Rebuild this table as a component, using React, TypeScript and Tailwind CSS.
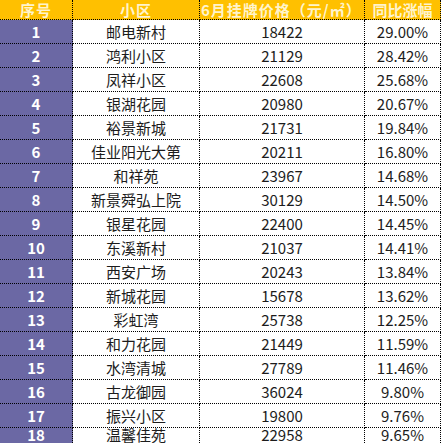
import React from "react";

const rows: [string, string, string, string][] = [
  ["1", "邮电新村", "18422", "29.00%"],
  ["2", "鸿利小区", "21129", "28.42%"],
  ["3", "凤祥小区", "22608", "25.68%"],
  ["4", "银湖花园", "20980", "20.67%"],
  ["5", "裕景新城", "21731", "19.84%"],
  ["6", "佳业阳光大第", "20211", "16.80%"],
  ["7", "和祥苑", "23967", "14.68%"],
  ["8", "新景舜弘上院", "30129", "14.50%"],
  ["9", "银星花园", "22400", "14.45%"],
  ["10", "东溪新村", "21037", "14.41%"],
  ["11", "西安广场", "20243", "13.84%"],
  ["12", "新城花园", "15678", "13.62%"],
  ["13", "彩虹湾", "25738", "12.25%"],
  ["14", "和力花园", "21449", "11.59%"],
  ["15", "水湾清城", "27789", "11.46%"],
  ["16", "古龙御园", "36024", "9.80%"],
  ["17", "振兴小区", "19800", "9.76%"],
  ["18", "温馨佳苑", "22958", "9.65%"],
];

const font = { fontFamily: '"Noto Sans CJK SC", "Noto Sans", sans-serif' };

export default function App() {
  return (
    <div className="w-[443px] h-[443px] overflow-hidden bg-white" style={font}>
      <div className="grid grid-cols-[73px_127px_165px_76px_2px] h-[20px] text-[15px] font-bold text-[#fff4cc] leading-none">
        <div className="bg-[#ffc000] border-r border-b border-dotted border-black flex items-center justify-center tracking-[1px]">序号</div>
        <div className="bg-[#ffc000] border-r border-b border-dotted border-black flex items-center justify-center tracking-[1px]">小区</div>
        <div className="bg-[#ffc000] border-r border-b border-dotted border-black flex items-center justify-start pl-[1px] whitespace-nowrap overflow-hidden tracking-[1px]">6月挂牌价格（元/㎡）</div>
        <div className="bg-[#ffc000] border-r border-b border-dotted border-black flex items-center justify-center whitespace-nowrap">同比涨幅</div>
        <div></div>
      </div>
      {rows.map((r, i) => {
        const last = i === rows.length - 1;
        const rowCls = last
          ? "grid grid-cols-[73px_127px_165px_76px_2px] h-[15px] text-[15px] leading-[14px] text-[#1c1c1c]"
          : "grid grid-cols-[73px_127px_165px_76px_2px] h-[24px] text-[15px] leading-none text-[#1c1c1c]";
        const cell = last
          ? "border-r border-dotted border-black flex items-start justify-center whitespace-nowrap"
          : "border-r border-b border-dotted border-black flex items-center justify-center whitespace-nowrap";
        return (
          <div key={r[0]} className={rowCls}>
            <div className={"bg-[#6b68a4] text-white font-bold " + cell}>{r[0]}</div>
            <div className={cell}>{r[1]}</div>
            <div className={cell}>{r[2]}</div>
            <div className={cell}>{r[3]}</div>
            <div></div>
          </div>
        );
      })}
    </div>
  );
}
